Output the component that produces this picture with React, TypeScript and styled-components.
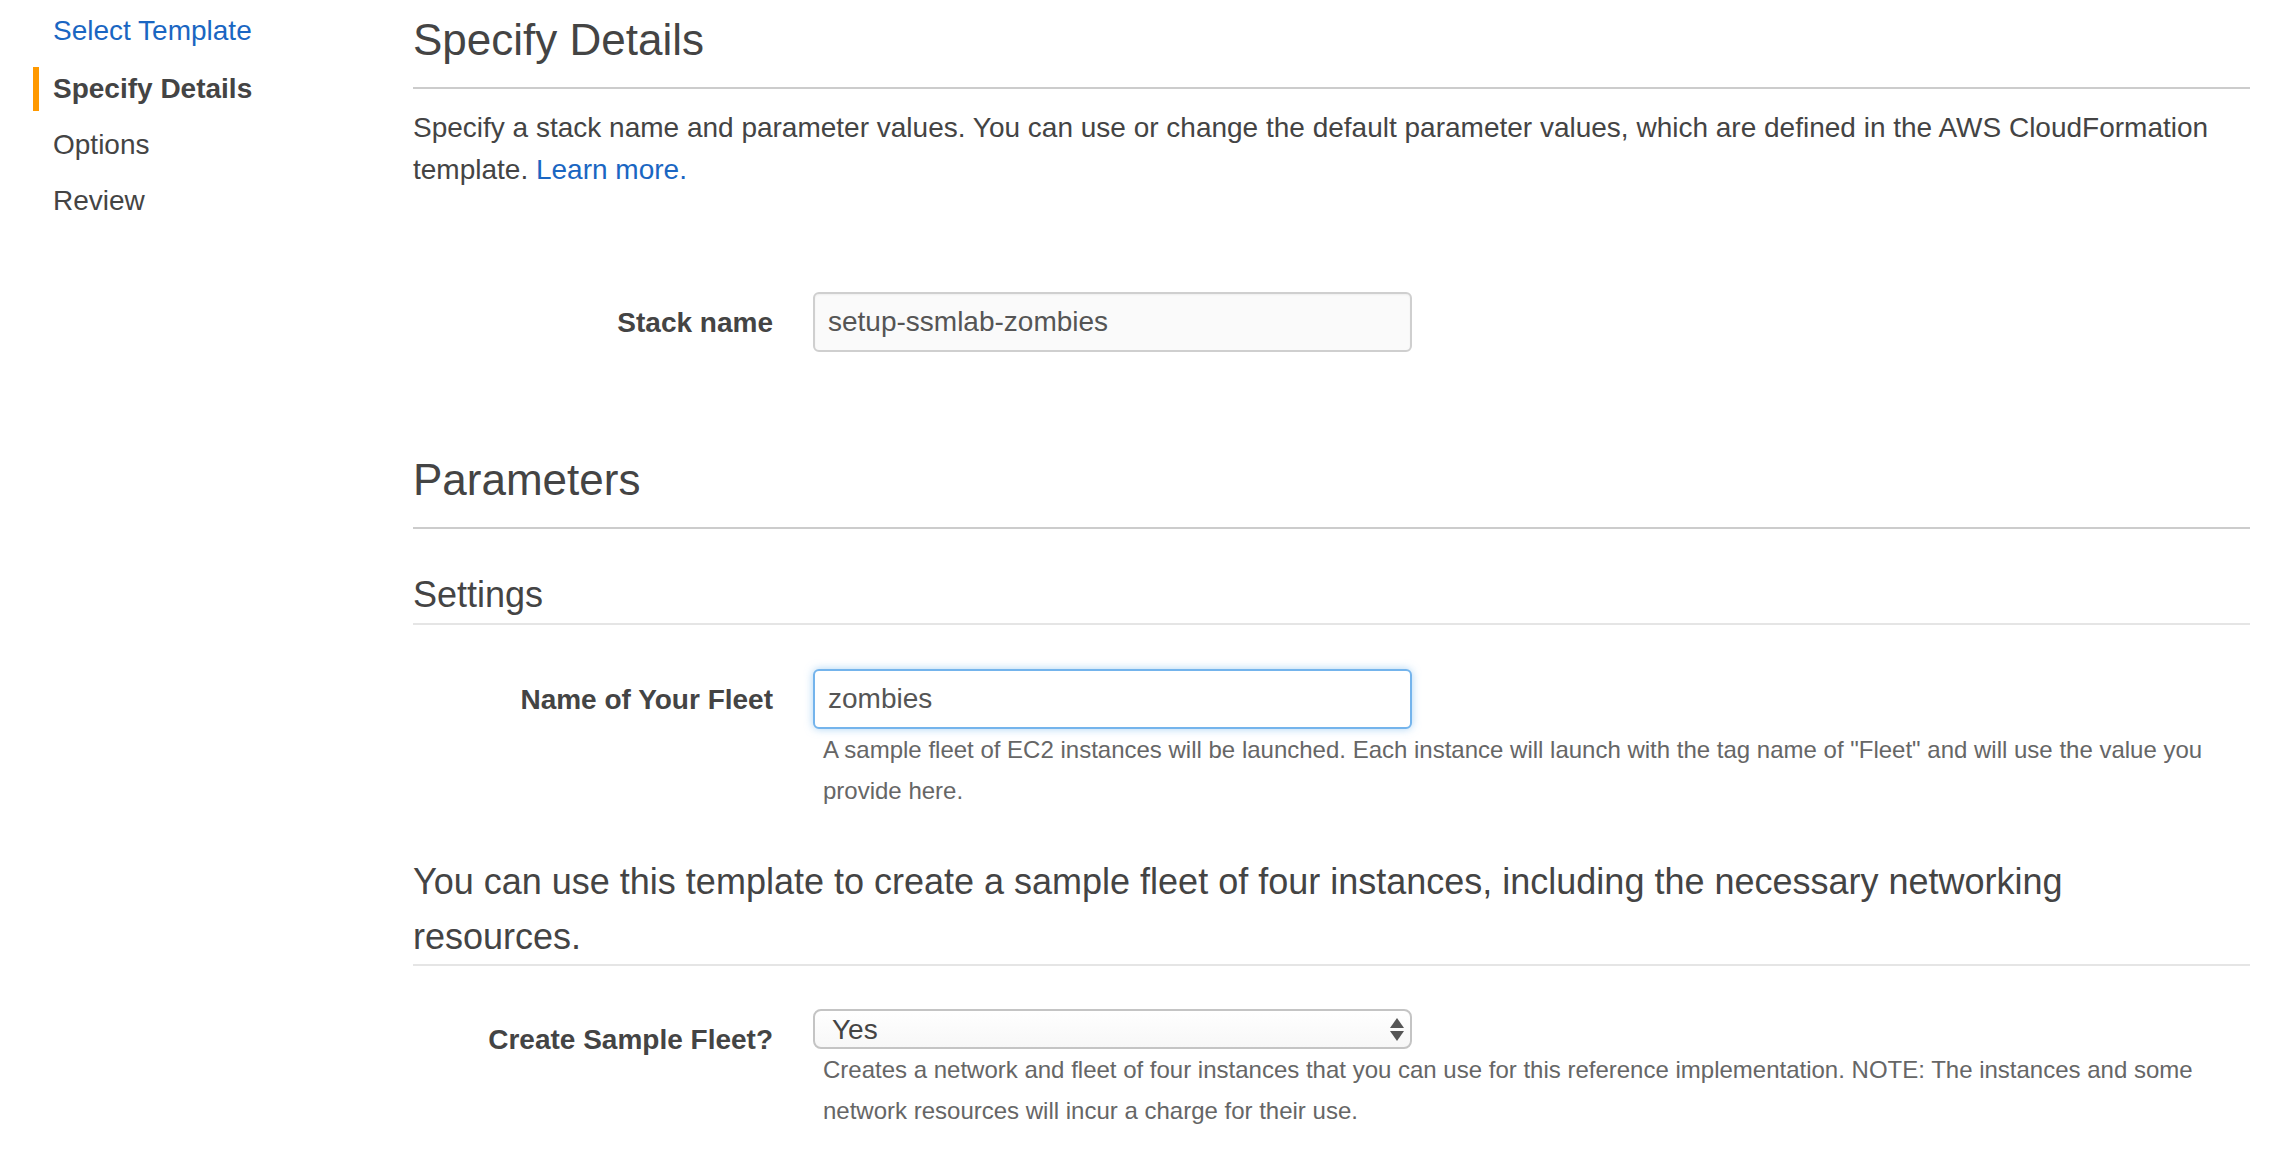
import React from "react";
import styled, { createGlobalStyle } from "styled-components";

const GlobalStyle = createGlobalStyle`
  html, body {
    margin: 0;
    padding: 0;
    background: #ffffff;
  }
  body {
    font-family: "Liberation Sans", Arial, Helvetica, sans-serif;
    color: #444444;
  }
  * { box-sizing: border-box; }
`;

const Page = styled.div`
  display: grid;
  grid-template-columns: 413px 1fr;
  padding-right: 43px;
  min-height: 1167px;
`;

const Nav = styled.nav`
  display: flex;
  flex-direction: column;
  gap: 12px;
  padding: 9px 0 0 33px;
`;

const NavItem = styled.div<{ $active?: boolean; $link?: boolean }>`
  height: 44px;
  line-height: 44px;
  padding-left: 14px;
  border-left: 6px solid ${(p) => (p.$active ? "#ff9900" : "transparent")};
  font-size: 28px;
  font-weight: ${(p) => (p.$active ? 700 : 400)};
  color: ${(p) => (p.$link ? "#1a66c2" : "#444444")};
  white-space: nowrap;
  &:first-child {
    margin-bottom: 2px;
  }
`;

const Main = styled.main`
  display: flex;
  flex-direction: column;
  padding-top: 16px;
`;

const Heading = styled.h1<{ $top?: number }>`
  margin: ${(p) => p.$top ?? 0}px 0 0;
  font-size: 44px;
  font-weight: 400;
  line-height: 48px;
  padding-bottom: 23px;
  border-bottom: 2px solid #cccccc;
  color: #444444;
`;

const SubHeading = styled.h2<{ $top?: number }>`
  margin: ${(p) => p.$top ?? 0}px 0 0;
  font-size: 36px;
  font-weight: 400;
  line-height: 40px;
  padding-bottom: 8px;
  border-bottom: 2px solid #e5e5e5;
  color: #444444;
`;

const Intro = styled.p`
  margin: 18px 0 0;
  font-size: 28px;
  line-height: 42px;
  color: #444444;
`;

const Link = styled.a`
  color: #1a66c2;
  text-decoration: none;
`;

const Description = styled.div<{ $top?: number }>`
  margin-top: ${(p) => p.$top ?? 0}px;
  border-bottom: 2px solid #e5e5e5;
`;

const DescriptionText = styled.p`
  margin: 0;
  max-width: 1720px;
  font-size: 36px;
  line-height: 55px;
  color: #444444;
`;

const FormRow = styled.div<{ $top?: number }>`
  display: grid;
  grid-template-columns: 360px 1fr;
  column-gap: 40px;
  margin-top: ${(p) => p.$top ?? 0}px;
`;

const Label = styled.label`
  text-align: right;
  font-size: 28px;
  font-weight: 700;
  line-height: 42px;
  padding-top: 10px;
  color: #444444;
  white-space: nowrap;
`;

const Field = styled.div`
  display: flex;
  flex-direction: column;
  align-items: flex-start;
`;

const TextInput = styled.input<{ $focused?: boolean }>`
  width: 599px;
  height: 60px;
  padding: 0 13px;
  font-family: "Liberation Sans", Arial, Helvetica, sans-serif;
  font-size: 28px;
  color: #555555;
  border-radius: 6px;
  outline: none;
  border: 2px solid ${(p) => (p.$focused ? "#74b4ec" : "#cfcfcf")};
  background: ${(p) => (p.$focused ? "#ffffff" : "#fafafa")};
  box-shadow: ${(p) =>
    p.$focused
      ? "0 0 9px rgba(102, 175, 233, 0.55)"
      : "inset 0 1px 2px rgba(0, 0, 0, 0.05)"};
`;

const SelectWrap = styled.div`
  position: relative;
  width: 599px;
  height: 40px;
`;

const Select = styled.select`
  appearance: none;
  -webkit-appearance: none;
  width: 100%;
  height: 40px;
  padding: 0 40px 0 17px;
  font-family: "Liberation Sans", Arial, Helvetica, sans-serif;
  font-size: 28px;
  color: #444444;
  border: 2px solid #c4c4c4;
  border-radius: 8px;
  background: linear-gradient(#ffffff, #f7f7f7);
  outline: none;
`;

const SelectArrows = styled.svg`
  position: absolute;
  right: 8px;
  top: 9px;
  width: 14px;
  height: 23px;
  pointer-events: none;
`;

const Help = styled.p`
  margin: 0;
  padding-left: 10px;
  font-size: 24px;
  line-height: 41px;
  color: #666666;
`;

export default function App() {
  return (
    <>
      <GlobalStyle />
      <Page>
        <Nav>
          <NavItem $link>Select Template</NavItem>
          <NavItem $active>Specify Details</NavItem>
          <NavItem>Options</NavItem>
          <NavItem>Review</NavItem>
        </Nav>
        <Main>
          <Heading>Specify Details</Heading>
          <Intro>
            Specify a stack name and parameter values. You can use or change the default
            parameter values, which are defined in the AWS CloudFormation template.{" "}
            <Link href="#">Learn more.</Link>
          </Intro>

          <FormRow $top={101}>
            <Label>Stack name</Label>
            <Field>
              <TextInput defaultValue="setup-ssmlab-zombies" />
            </Field>
          </FormRow>

          <Heading $top={104}>Parameters</Heading>
          <SubHeading $top={46}>Settings</SubHeading>

          <FormRow $top={44}>
            <Label>Name of Your Fleet</Label>
            <Field>
              <TextInput $focused defaultValue="zombies" />
              <Help>
                A sample fleet of EC2 instances will be launched. Each instance will launch
                with the tag name of "Fleet" and will use the value you provide here.
              </Help>
            </Field>
          </FormRow>

          <Description $top={43}>
            <DescriptionText>
              You can use this template to create a sample fleet of four instances,
              including the necessary networking resources.
            </DescriptionText>
          </Description>

          <FormRow $top={43}>
            <Label>Create Sample Fleet?</Label>
            <Field>
              <SelectWrap>
                <Select defaultValue="Yes">
                  <option value="Yes">Yes</option>
                  <option value="No">No</option>
                </Select>
                <SelectArrows viewBox="0 0 14 23">
                  <polygon points="7,0 14,10 0,10" fill="#555555" />
                  <polygon points="0,13 14,13 7,23" fill="#555555" />
                </SelectArrows>
              </SelectWrap>
              <Help>
                Creates a network and fleet of four instances that you can use for this
                reference implementation. NOTE: The instances and some network resources
                will incur a charge for their use.
              </Help>
            </Field>
          </FormRow>
        </Main>
      </Page>
    </>
  );
}
